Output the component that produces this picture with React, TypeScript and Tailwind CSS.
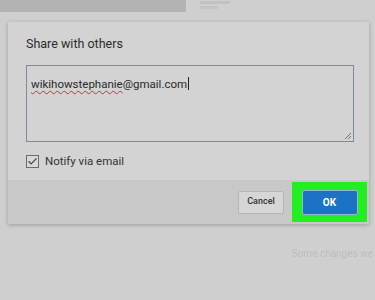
import { Check } from "lucide-react";

export default function App() {
  return (
    <div
      className="relative h-[300px] w-[375px] overflow-hidden bg-[#cfcfcf]"
      style={{ fontFamily: "Roboto, 'Liberation Sans', sans-serif" }}
    >
      {/* faded page behind */}
      <div className="flex h-[14px] items-start">
        <div className="h-[12px] w-[186px] bg-[#b3b3b3]" />
        <div className="ml-[14px] mt-[1px] flex flex-col gap-[2px]">
          <div className="h-[3px] w-[30px] bg-[#c2c2c2]" />
          <div className="h-[3px] w-[18px] bg-[#c4c4c4]" />
        </div>
      </div>

      <div className="ml-[8px] mt-[8px] w-[361px] bg-[#d3d3d3] shadow-[0_1px_4px_rgba(0,0,0,0.25)]">
        <div className="px-[18px] pt-[14px] pb-[11px]">
          <h2 className="text-[12.5px] leading-[16px] text-[#2c2c2c]">Share with others</h2>
          <div className="relative mt-[13px] h-[77px] w-[328px] border border-[#7d8c99] px-[4px] pt-[5px]">
            <span className="text-[11.5px] leading-[14px] text-[#2a2a2a]">
              <span className="underline decoration-[#c0392b] decoration-wavy decoration-1 underline-offset-2">
                wikihowstephanie
              </span>
              @gmail.com
            </span>
            <span className="ml-[1px] inline-block h-[13px] w-[1px] translate-y-[2px] bg-[#222]" />
            <svg className="absolute bottom-[2px] right-[2px]" width="6" height="6" viewBox="0 0 6 6">
              <path d="M0 6L6 0M3 6L6 3" stroke="#777" strokeWidth="1" />
            </svg>
          </div>
          <div className="mt-[11px] flex items-center gap-[6px]">
            <div className="flex h-[13px] w-[13px] items-center justify-center border border-[#6b6b6b] bg-[#d8d8d8]">
              <Check size={11} strokeWidth={2.5} className="text-[#444]" />
            </div>
            <span className="text-[11.5px] leading-[16px] text-[#333]">Notify via email</span>
          </div>
        </div>
        <div className="flex h-[44px] items-center justify-end bg-[#c8c8c8] pr-[2px]">
          <button className="h-[23px] w-[46px] rounded-[2px] border border-[#b5b5b5] bg-[#d6d6d6] text-[9px] font-medium text-[#333]">
            Cancel
          </button>
          <div className="ml-[8px] flex h-[40px] w-[75px] items-center justify-center bg-[#22ee22]">
            <button className="h-[25px] w-[56px] rounded-[2px] border border-[#8fb8dc] bg-[#1c73c6] text-[10px] font-bold text-white">
              OK
            </button>
          </div>
        </div>
      </div>

      <div className="mt-[16px] pr-[2px] text-right">
        <span className="text-[10px] text-[#bdbdbd] blur-[0.4px]">Some changes we</span>
      </div>
    </div>
  );
}
